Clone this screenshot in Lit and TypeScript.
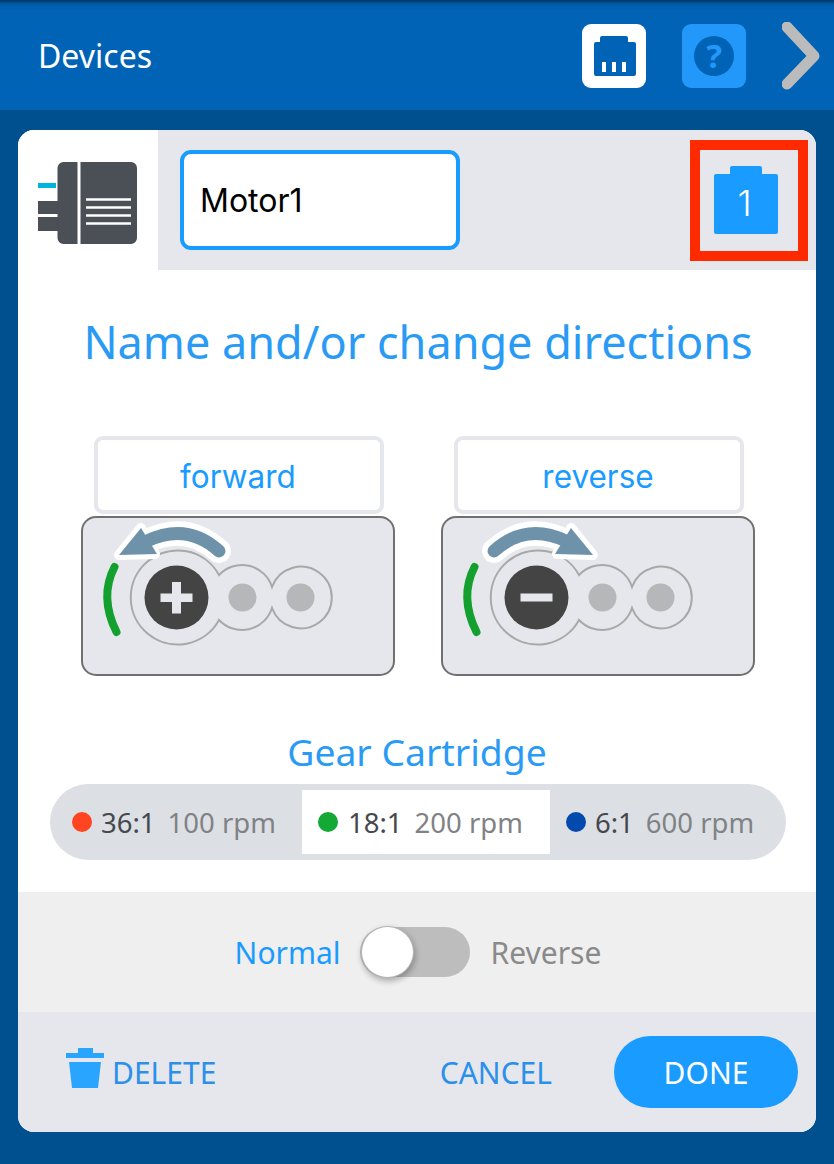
import { LitElement, html, css, svg } from "lit";
import { customElement } from "lit/decorators.js";

const motor = (sign: "plus" | "minus") => svg`
  <svg class="motor-art" viewBox="0 0 314 160" width="314" height="160">
    <path d="M138 59 A47 47 0 1 0 138 104 A31.500 31.500 0 0 0 191 92 A30.800 30.800 0 1 0 191 71 A31.500 31.500 0 0 0 138 59 Z" fill="none" stroke="#a8a8a8" stroke-width="2"/>
    <circle cx="95.500" cy="81.500" r="32" fill="#444444"/>
    ${sign === "plus"
      ? svg`<path d="M79.500 77.500h11.500v-11.500h9v11.500h11.500v8.500h-11.500v11.500h-9v-11.500h-11.500z" fill="#e6e7ec"/>`
      : svg`<rect x="79.500" y="77.500" width="32" height="8" fill="#e6e7ec"/>`}
    <circle cx="161.500" cy="81.500" r="14" fill="#b6b7b9"/>
    <circle cx="219.500" cy="81.500" r="14" fill="#b6b7b9"/>
    <path d="M33.500 51 Q18 81 35.500 116" fill="none" stroke="#14a02f" stroke-width="8" stroke-linecap="round"/>
    ${sign === "plus"
      ? svg`
        <path d="M138 35 Q106 6 66 25" fill="none" stroke="#fff" stroke-width="24" stroke-linecap="round"/>
        <path d="M60 12 L38 39 L74 38 Z" fill="#fff" stroke="#fff" stroke-width="10" stroke-linejoin="round"/>
        <path d="M138 35 Q106 6 66 25" fill="none" stroke="#6f92ab" stroke-width="13" stroke-linecap="round"/>
        <path d="M60 12 L38 39 L76 38 Z" fill="#6f92ab"/>`
      : svg`
        <path d="M53 35 Q85 6 125 25" fill="none" stroke="#fff" stroke-width="24" stroke-linecap="round"/>
        <path d="M130 12 L152 39 L116 38 Z" fill="#fff" stroke="#fff" stroke-width="10" stroke-linejoin="round"/>
        <path d="M53 35 Q85 6 125 25" fill="none" stroke="#6f92ab" stroke-width="13" stroke-linecap="round"/>
        <path d="M130 12 L152 39 L114 38 Z" fill="#6f92ab"/>`}
  </svg>`;

@customElement("app-root")
export class AppRoot extends LitElement {
  static styles = css`
    :host { display: block; width: 834px; height: 1164px; background: #00508f; font-family: "Noto Sans", sans-serif; overflow: hidden; }
    * { box-sizing: border-box; }
    .top { height: 110px; background: linear-gradient(#00365f 0, #005ba8 4px, #0063b5 10px); display: flex; align-items: center; padding: 2px 14px 0 38px; }
    .top-title { color: #fff; font-size: 32px; flex: 1; line-height: 40px; }
    .top-btn { width: 64px; height: 64px; border-radius: 9px; display: block; }
    .net { background: #fff; margin-right: 36px; }
    .help { background: #2298fb; margin-right: 36px; }
    .chev { display: block; }
    .main { padding: 20px 18px 32px; }
    .card { height: 1002px; border-radius: 16px; overflow: hidden; background: #fff; display: flex; flex-direction: column; }
    .head { height: 140px; display: flex; background: #e6e7ec; flex: none; }
    .head-icon { width: 140px; background: #fff; flex: none; display: flex; }
    .name { width: 280px; height: 100px; margin: 20px 0 0 22px; border: 4px solid #1a9bff; border-radius: 11px; background: #fff; color: #000; font-family: "Inter", sans-serif; font-size: 32px; display: flex; align-items: center; padding: 0 16px; }
    .slot { width: 118px; height: 121px; margin: 10px 0 0 230px; border: 10px solid #ff2a00; display: flex; align-items: center; justify-content: center; }
    .slot-inner { position: relative; width: 64px; height: 68px; margin: -1px 6px 0 0; }
    .slot-num { position: absolute; inset: 6px 3px 0 0; display: flex; align-items: center; justify-content: center; color: #fff; font-family: "Inter", sans-serif; font-size: 36px; font-weight: 300; }
    .body { flex: 1; display: flex; flex-direction: column; }
    .title { margin: 42px 0 0; padding-left: 2px; text-align: center; color: #2a9bf5; font-size: 45px; line-height: 60px; font-weight: 400; }
    .dirs { display: grid; grid-template-columns: 314px 314px; gap: 46px; margin: 64px 0 0 63px; }
    .dir { display: flex; flex-direction: column; gap: 2px; }
    .dir-btn { width: 290px; height: 78px; margin-left: 13px; border: 4px solid #e6e7ec; border-radius: 9px; display: flex; align-items: center; justify-content: center; color: #1a9bff; font-family: "Inter", sans-serif; font-size: 31.500px; padding: 2px 2px 0 0; }
    .panel { width: 314px; height: 160px; background: #e6e7ec; border: 2px solid #707070; border-radius: 15px; position: relative; }
    .motor-art { position: absolute; left: -2px; top: -2px; }
    .gear-title { margin: 54px 0 0; text-align: center; color: #2a9bf5; font-size: 37.300px; line-height: 44px; font-weight: 400; }
    .seg { margin: 10px 30px 0 32px; height: 76px; border-radius: 38px; background: #dcdfe4; display: grid; grid-template-columns: 252px 248px 1fr; align-items: center; }
    .opt { height: 64px; display: flex; align-items: center; font-size: 27.500px; color: #808285; white-space: nowrap; padding-left: 16px; }
    .opt.first { padding-left: 22px; }
    .opt.on { background: #fff; }
    .opt.on .dot { margin-right: 10px; }
    .dot { width: 20px; height: 20px; border-radius: 50%; margin-right: 9px; flex: none; }
    .red { background: #ff4422; }
    .green { background: #14a835; }
    .blue { background: #0449ad; }
    .ratio { color: #45484c; margin-right: 12px; }
    .options { height: 120px; background: #efeff0; display: flex; align-items: center; justify-content: center; gap: 20px; font-size: 30px; flex: none; padding-left: 2px; }
    .normal { color: #1a9bff; }
    .rev { color: #8a8a8a; }
    .toggle { width: 110px; height: 50px; border-radius: 25px; background: #bdbdbd; position: relative; margin: 0 1px 0 -1px; }
    .knob { position: absolute; left: 1px; top: -1px; width: 53px; height: 52px; border-radius: 50%; background: #fff; border: 1px solid #b4b4b4; box-shadow: 1px 3px 6px rgba(0,0,0,.3); }
    .foot { height: 120px; background: #e6e7ec; display: flex; align-items: center; padding: 0 18px 0 48px; font-size: 30px; color: #2a90ea; flex: none; }
    .del { display: flex; align-items: center; gap: 8px; flex: 1; }
    .trash { margin-top: -8px; }
    .cancel { margin-right: 62px; }
    .done { width: 184px; height: 72px; border-radius: 36px; background: #1a9bff; color: #fff; display: flex; align-items: center; justify-content: center; }
  `;

  render() {
    return html`
      <div class="top">
        <div class="top-title">Devices</div>
        <svg class="top-btn net" viewBox="0 0 64 64"><path d="M20 12h24a2 2 0 0 1 2 2v4h6a2 2 0 0 1 2 2v30a2 2 0 0 1-2 2H14a2 2 0 0 1-2-2V20a2 2 0 0 1 2-2h4v-4a2 2 0 0 1 2-2z" fill="#0063b5"/><path d="M20 38h4v10h-4zM30 38h4v10h-4zM40 38h4v10h-4z" fill="#fff"/></svg>
        <svg class="top-btn help" viewBox="0 0 64 64"><circle cx="32" cy="32" r="20" fill="#0063b5"/><text x="32" y="44" text-anchor="middle" font-family="Noto Sans, sans-serif" font-weight="700" font-size="33" fill="#2298fb">?</text></svg>
        <svg class="chev" width="38" height="68" viewBox="0 0 38 68"><path d="M5 5 L32 34 L5 62" fill="none" stroke="#bbbbbb" stroke-width="11" stroke-linecap="round" stroke-linejoin="round"/></svg>
      </div>
      <div class="main">
        <div class="card">
          <div class="head">
            <div class="head-icon">
              <svg width="140" height="140" viewBox="0 0 140 140">
                <path d="M20 71h20v13H20zM20 87h20v14H20z" fill="#4b4f56"/>
                <rect x="20" y="53" width="18" height="5" fill="#00b4e0"/>
                <path d="M59.500 32h-14a6 6 0 0 0-6 6v70a6 6 0 0 0 6 6h14zM62.500 32V114H113a6 6 0 0 0 6-6V38a6 6 0 0 0-6-6z" fill="#4b4f56"/>
                <path d="M68 69.500h45M68 77.500h45M68 85.500h45M68 93.500h45" stroke="#fff" stroke-width="2.500"/>
              </svg>
            </div>
            <div class="name">Motor1</div>
            <div class="slot">
              <div class="slot-inner">
                <svg width="64" height="68" viewBox="0 0 64 68"><path d="M16 2a2 2 0 0 1 2-2h28a2 2 0 0 1 2 2v6h14a2 2 0 0 1 2 2v56a2 2 0 0 1-2 2H2a2 2 0 0 1-2-2V10a2 2 0 0 1 2-2h14z" fill="#1a9bff"/></svg>
                <div class="slot-num">1</div>
              </div>
            </div>
          </div>
          <div class="body">
            <h1 class="title">Name and/or change directions</h1>
            <div class="dirs">
              <div class="dir"><div class="dir-btn">forward</div><div class="panel">${motor("plus")}</div></div>
              <div class="dir"><div class="dir-btn">reverse</div><div class="panel">${motor("minus")}</div></div>
            </div>
            <h2 class="gear-title">Gear Cartridge</h2>
            <div class="seg">
              <div class="opt first"><span class="dot red"></span><span class="ratio">36:1</span>100 rpm</div>
              <div class="opt on"><span class="dot green"></span><span class="ratio">18:1</span>200 rpm</div>
              <div class="opt last"><span class="dot blue"></span><span class="ratio">6:1</span>600 rpm</div>
            </div>
          </div>
          <div class="options">
            <span class="normal">Normal</span>
            <div class="toggle"><div class="knob"></div></div>
            <span class="rev">Reverse</span>
          </div>
          <div class="foot">
            <div class="del">
              <svg class="trash" width="38" height="40" viewBox="0 0 38 40"><path d="M12 0h15v5h11v5H0V5h12z" fill="#2aa5ff"/><path d="M3 14h32l-3 26H6z" fill="#2aa5ff"/></svg>
              <span>DELETE</span>
            </div>
            <span class="cancel">CANCEL</span>
            <div class="done">DONE</div>
          </div>
        </div>
      </div>
    `;
  }
}
